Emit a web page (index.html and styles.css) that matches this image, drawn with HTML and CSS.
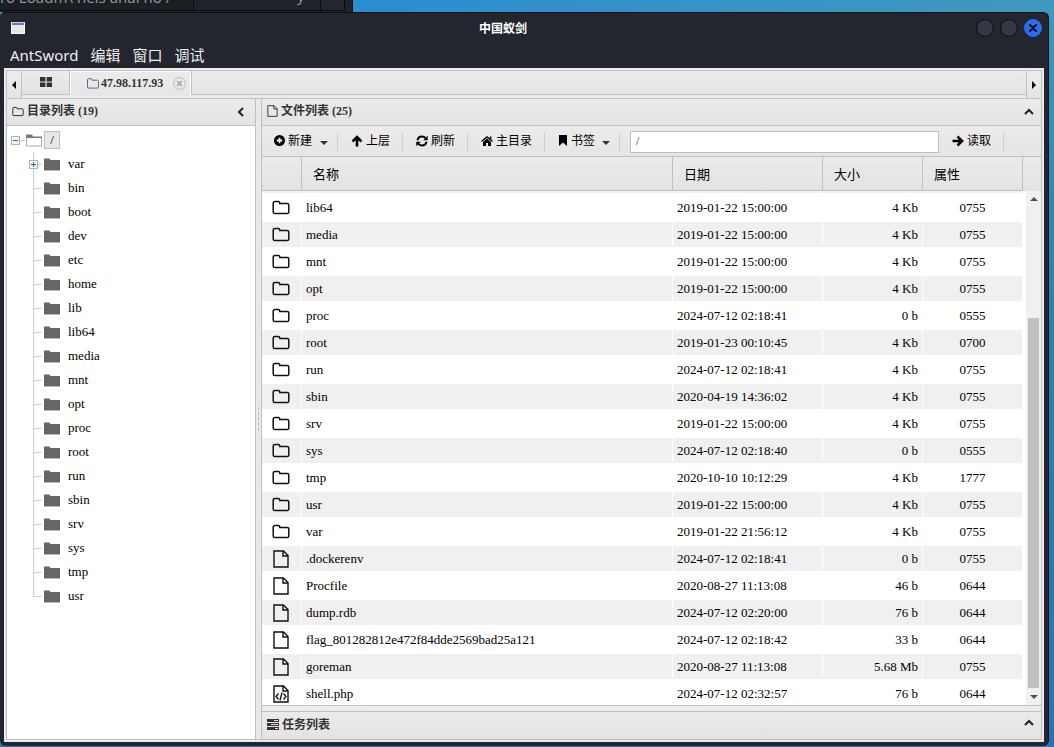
FILE: index.html
```html
<!DOCTYPE html>
<html lang="zh-CN">
<head>
<meta charset="utf-8">
<title>中国蚁剑</title>
<link rel="stylesheet" href="styles.css">
</head>
<body>
<svg class="sprites" aria-hidden="true">
  <symbol id="i-folder-o" viewBox="0 0 18 15"><path d="M1.2 3.2q0-1.8 1.8-1.8h3.3q1.5 0 1.5 2h7.4q1.6 0 1.6 1.6v7q0 1.6-1.6 1.6H3q-1.8 0-1.8-1.6z" fill="none" stroke="currentColor" stroke-width="1.5"/></symbol>
  <symbol id="i-file-o" viewBox="0 0 16 18"><path d="M1 1h9.5L15 5.5V17H1zM10 1v5h5" fill="none" stroke="currentColor" stroke-width="1.4"/></symbol>
  <symbol id="i-code" viewBox="0 0 16 18"><path d="M1 1h9.5L15 5.5V17H1zM10 1v5h5" fill="none" stroke="currentColor" stroke-width="1.4"/><path d="M5.5 8.5L3 11.5l2.500 3M10.500 8.500l2.500 3-2.500 3M9 7.500l-2 8" fill="none" stroke="currentColor" stroke-width="1.300"/></symbol>
  <symbol id="i-folder" viewBox="0 0 16 13"><path d="M0 .5h5.500l1 1.500H16v10.500H0z" fill="#666"/><path d="M0 12.500h16" stroke="#bbb"/></symbol>
  <symbol id="i-folder-open" viewBox="0 0 16 13"><path d="M.5 3.500h15v8.500H.5z" fill="#fff" stroke="#aaa"/><path d="M0 .5h6l1 2h9v1.500H0z" fill="#777"/></symbol>
</svg>
<div class="desktop">
  <div class="terminal" aria-hidden="true">
    <span class="term-tab">ro Loadm\ hels anal no /</span>
    <span class="term-main">y</span>
    <span class="term-box"></span>
  </div>
  <main class="window">
    <header class="titlebar">
      <svg class="app-icon" viewBox="0 0 14 12"><path d="M0 0h14v12H0z" fill="#e6e9e2"/><path d="M0 0h14v3H0z" fill="#5c7fb5"/><path d="M0 0h14v1H0z" fill="#c7d3e4"/><path d="M.5.5v11h13V.5" fill="none" stroke="#fafafa"/></svg>
      <h1>中国蚁剑</h1>
      <div class="controls">
        <button class="ctl" aria-label="最小化"></button>
        <button class="ctl" aria-label="最大化"></button>
        <button class="ctl close" aria-label="关闭"><svg viewBox="0 0 8 8"><path d="M1 1l6 6M7 1L1 7" stroke="#0b1020" stroke-width="2.200" stroke-linecap="round"/></svg></button>
      </div>
    </header>
    <nav class="menu">
      <button>AntSword</button><button>编辑</button><button>窗口</button><button>调试</button>
    </nav>
    <div class="client">
      <div class="frame">
        <div class="tabbar">
          <button class="scroll-btn left" aria-label="向左"><svg viewBox="0 0 4 8"><path d="M4 0v8L0 4z"/></svg></button>
          <button class="tab home" aria-label="主页"><svg viewBox="0 0 12 10"><path d="M0 0h5.400v4.400H0zM6.600 0H12v4.400H6.600zM0 5.600h5.400V10H0zM6.600 5.600H12V10H6.600z"/></svg></button>
          <div class="tab active"><svg class="tab-folder" viewBox="0 0 12 11"><path d="M.5 2q0-1.300 1.200-1.300H4q1 0 1 1.500h5.300q1.200 0 1.200 1.200v5.500q0 1.200-1.200 1.200H1.700Q.5 10.100.5 9z" fill="none" stroke="#4d6d96"/></svg><span>47.98.117.93</span>
            <button class="tab-close" aria-label="关闭标签"><svg viewBox="0 0 13 13"><circle cx="6.500" cy="6.500" r="5.900" fill="none" stroke="#bbb" stroke-width="1"/><path d="M4.200 4.200l4.600 4.600M8.800 4.200L4.200 8.800" stroke="#aaa" stroke-width="1.800"/></svg></button>
          </div>
          <div class="tab-fill"></div>
          <button class="scroll-btn right" aria-label="向右"><svg viewBox="0 0 4 8"><path d="M0 0v8l4-4z"/></svg></button>
        </div>
        <div class="panes">
          <section class="side">
            <div class="pane-title"><svg class="t-folder"><use href="#i-folder-o"/></svg><h2>目录列表 (19)</h2><button class="fold" aria-label="折叠"><svg viewBox="0 0 10 10"><path d="M7 1L3 5l4 4" /></svg></button></div>
            <ul class="tree">
              <li><div class="node"><span class="branch root"><i class="toggle"></i></span><svg class="dir"><use href="#i-folder-open"/></svg><span class="label selected">/</span></div>
                <ul id="tree"></ul>
              </li>
            </ul>
          </section>
          <div class="splitter"><i></i></div>
          <section class="main">
            <div class="pane-title"><svg class="t-file"><use href="#i-file-o"/></svg><h2>文件列表 (25)</h2><button class="fold" aria-label="折叠"><svg viewBox="0 0 10 10"><path d="M1 7l4-4 4 4"/></svg></button></div>
            <div class="toolbar">
              <button class="tool drop"><svg class="narrow" viewBox="0 0 12 12"><circle cx="6" cy="6" r="6"/><path d="M6 3v6M3 6h6" stroke="#eee" stroke-width="2"/></svg>新建<b class="caret"></b></button>
              <button class="tool"><svg viewBox="0 0 12 12"><path d="M6 11.500V2.500M1.500 6.500L6 2l4.500 4.500" fill="none" stroke="#000" stroke-width="2.600"/></svg>上层</button>
              <button class="tool"><svg viewBox="0 0 12 12"><path d="M1.500 5.200C2 2.800 4 1.500 6 1.500q2 0 3.500 1.500M10.500 6.800C10 9.200 8 10.500 6 10.500q-2 0-3.500-1.500" fill="none" stroke="#000" stroke-width="2"/><path d="M11.700.8v4.400H7.300zM.3 11.200V6.800h4.400z"/></svg>刷新</button>
              <button class="tool"><svg viewBox="0 0 12 12"><path d="M6 1l6 5-.8.900L6 2.700.8 6.900 0 6zM6 3.600l4 3.300V11H7V8H5v3H2V6.900zM8.800 1.500h1.600v3L8.800 3z"/></svg>主目录</button>
              <button class="tool drop"><svg class="narrow" viewBox="0 0 9 11"><path d="M.5 0h8v11L4.500 7.500.5 11z"/></svg>书签<b class="caret"></b></button>
              <input class="path" type="text" value="/" aria-label="路径">
              <button class="tool"><svg viewBox="0 0 12 12"><path d="M.5 6h9M5.500 1.500L10 6l-4.500 4.500" fill="none" stroke="#000" stroke-width="2.600"/></svg>读取</button>
            </div>
            <div class="grid">
              <div class="table-wrap">
                <table>
                  <thead><tr><th class="c-icon"></th><th>名称</th><th class="c-date">日期</th><th class="c-size">大小</th><th class="c-perm">属性</th></tr></thead>
                  <tbody id="files"><tr class="peek"><td></td><td></td><td></td><td></td><td></td></tr></tbody>
                </table>
              </div>
              <div class="gutter">
                <div class="gutter-head"></div>
                <div class="scrollbar"><svg viewBox="0 0 8 4"><path d="M0 4h8L4 0z"/></svg><div class="track"><div class="thumb"></div></div><svg viewBox="0 0 8 4"><path d="M0 0h8L4 4z"/></svg></div>
              </div>
            </div>
            <div class="h-gap"></div>
            <div class="pane-title tasks"><svg class="t-tasks" viewBox="0 0 12 11"><path d="M0 0h12v3H0zM0 4h12v3H0zM0 8h12v3H0z" fill="#333"/><path d="M7 1.500h4M4 5.500h7M8 9.500h3" stroke="#ddd"/></svg><h2>任务列表</h2><button class="fold" aria-label="展开"><svg viewBox="0 0 10 10"><path d="M1 7l4-4 4 4"/></svg></button></div>
          </section>
        </div>
      </div>
    </div>
  </main>
</div>
<script src="app.js"></script>
</body>
</html>
```
FILE: styles.css
```css
* { box-sizing: border-box; }
body { margin: 0; font: 13px/16px "Liberation Serif", "Noto Sans CJK SC", serif; color: #000; }
h1, h2, ul { margin: 0; padding: 0; }
ul { list-style: none; }
svg { display: block; flex: none; }
button { border: 0; padding: 0; background: none; font: inherit; color: inherit; }
.sprites { display: none; }

.desktop {
  height: 100vh; display: flex; flex-direction: column; padding: 0 5px 1px 0; overflow: hidden;
  background: linear-gradient(90deg, #2b8ccf 353px, #3f99bf 100%) top / 100% 12px no-repeat,
    linear-gradient(#3e99bd, #2e80ad 40%, #2a72b8) #2a72b8;
}
.terminal { height: 12px; width: 353px; flex: none; display: flex; background: #1f222a; border-right: 1px solid #0b0c10; overflow: hidden; font: bold 15px/18px "Noto Sans", sans-serif; color: #8f9296; }
.terminal span { height: 11px; display: flex; align-items: flex-end; border-bottom: 1px solid #0d0e12; }
.term-tab { width: 194px; background: #1b1e23; border-right: 1px solid #0b0c10; padding-bottom: 4px; white-space: pre; font-weight: normal; }
.term-main { width: 127px; padding-left: 103px; padding-bottom: 6px; border-right: 1px solid #0b0c10; font-weight: normal; }
.term-box { width: 24px; border-right: 1px solid #0b0c10; background: #23262f; }

.window { flex: 1; min-height: 0; display: flex; flex-direction: column; background: #23262e; border-top: 1px solid #0d0f14; border-right: 1px solid #0d0f14; border-radius: 5px 6px 6px 6px; }
.titlebar { height: 30px; flex: none; display: flex; align-items: center; padding: 0 6px 0 11px; }
.app-icon { width: 14px; height: 12px; }
.titlebar h1 { flex: 1; padding-left: 5px; text-align: center; font: bold 12px/16px "Noto Sans CJK SC", sans-serif; color: #fff; }
.controls { display: flex; gap: 6px; }
.ctl { width: 18px; height: 18px; border-radius: 50%; border: 1px solid #0a0b0f; background: #343844; display: grid; place-items: center; }
.ctl.close { background: #2a6cf0; border-color: #2a6cf0; }
.ctl svg { width: 8px; height: 8px; }
.menu { height: 25px; flex: none; display: flex; align-items: center; gap: 12px; padding: 0 0 1px 10px; font: 15px/20px "Noto Sans", "Noto Sans CJK SC", sans-serif; color: #eee; }

.client { flex: 1; min-height: 0; margin: 0 4px 4px; background: #ebebeb; padding: 2px; display: flex; }
.frame { flex: 1; min-width: 0; display: flex; flex-direction: column; border: 1px solid #c0c0c0; }

.tabbar { height: 28px; flex: none; display: flex; align-items: flex-start; border-bottom: 1px solid #c0c0c0; background: #ebebeb; font-size: 12px; font-weight: bold; color: #333; }
.scroll-btn { width: 15px; height: 27px; display: grid; place-items: center; padding-top: 1px; background: linear-gradient(#ededed, #e4e4e4); }
.scroll-btn svg { width: 4px; height: 8px; }
.scroll-btn.left { border-right: 1px solid #c0c0c0; }
.scroll-btn.right { border-left: 1px solid #c0c0c0; }
.tab { height: 24px; display: flex; align-items: center; background: linear-gradient(#ebebeb, #e3e3e3); }
.tab.home { width: 48px; justify-content: center; padding-bottom: 1px; border: solid #c0c0c0; border-width: 0 1px 1px 0; }
.home svg { width: 12px; height: 10px; fill: #333; }
.tab.active { height: 25px; border: solid #fff; border-width: 1px 1px 0; padding: 0 4px 2px 16px; background: linear-gradient(#ebebeb, #e6e6e6); }
.tab-folder { width: 12px; height: 11px; margin-right: 2px; }
.tab-close { margin-left: 10px; }
.tab-close svg { width: 13px; height: 13px; }
.tab-fill { flex: 1; height: 24px; border: solid #c0c0c0; border-width: 0 0 1px 1px; background: linear-gradient(#ebebeb, #e4e4e4); }

.panes { flex: 1; min-height: 0; display: flex; }
.side { width: 249px; flex: none; border-right: 1px solid #c0c0c0; background: #fff; }
.splitter { width: 5px; flex: none; background: #e9e9e9; display: grid; place-items: center; }
.splitter i { height: 24px; border-left: 1px dashed #bbb; }
.main { flex: 1; min-width: 0; display: flex; flex-direction: column; border-left: 1px solid #c0c0c0; }
.pane-title { height: 27px; flex: none; display: flex; align-items: center; padding: 0 7px 2px 5px; border-bottom: 1px solid #c0c0c0; background: linear-gradient(#ebebeb, #e3e3e3); color: #333; }
.pane-title h2 { flex: 1; font-size: 12px; line-height: 16px; }
.pane-title svg { margin-right: 3px; }
.t-folder { width: 12px; height: 11px; }
.t-file { width: 11px; height: 12px; }
.pane-title .t-tasks { width: 12px; height: 11px; }
.fold svg { width: 10px; height: 10px; margin: 2px 0 0; fill: none; stroke: #222; stroke-width: 2; }
.pane-title .fold svg { margin-right: 0; }
.side .fold { margin-right: 2px; }
.pane-title.tasks { height: 28px; border-width: 1px 0 0; border-top: 1px solid #c0c0c0; }
.tasks .fold { padding-bottom: 6px; }
.h-gap { height: 5px; flex: none; background: #ebebeb; }

.tree { padding-top: 2px; }
.node { height: 24px; display: flex; align-items: center; }
.branch { width: 18px; height: 24px; flex: none; display: flex; align-items: center; padding-left: 3px;
  background: linear-gradient(#d0d0d0, #d0d0d0) 7px 0 / 1px 100% no-repeat, linear-gradient(#d0d0d0, #d0d0d0) 7px 12px / 9px 1px no-repeat; }
.branch.root { width: 19px; padding-left: 4px; background: linear-gradient(#d0d0d0, #d0d0d0) 10px 12px / 8px 1px no-repeat; }
.tree ul { padding-left: 19px; }
li:last-child > .node > .branch:not(.root) { background-size: 1px 13px, 9px 1px; }
.toggle { width: 9px; height: 9px; border: 1px solid #a5b6c0; background: linear-gradient(#40697e, #40697e) center / 5px 1px no-repeat #eef5f8; }
.toggle.plus { background: linear-gradient(#40697e, #40697e) center / 5px 1px no-repeat, linear-gradient(#40697e, #40697e) center / 1px 5px no-repeat #eef5f8; }
.dir { width: 16px; height: 13px; }
.label { margin-left: 8px; }
.label.selected { margin-left: 2px; width: 16px; height: 18px; line-height: 16px; text-align: center; border: 1px solid #c0c0c0; background: #e8e8e8; }

.toolbar { height: 31px; flex: none; display: flex; align-items: center; padding: 1px 37px 0 0; border-bottom: 1px solid #c0c0c0; background: linear-gradient(#ebebeb, #e5e5e5); font-size: 12px; }
.tool { height: 20px; display: flex; align-items: center; gap: 3px; padding: 0 12px 2px 13px; border-right: 1px solid #c3d3dc; white-space: nowrap; }
.tool.drop { padding-right: 9px; }
.tool:first-child { padding-left: 12px; }
.tool svg { width: 12px; height: 12px; }
.tool svg.narrow { width: 11px; height: 11px; }
.tool:not(:first-child) svg.narrow { width: 10px; }
.tool:first-child .caret { margin-left: 5px; }
.caret { border: solid transparent; border-width: 4px 4px 0; border-top-color: #333; margin: 4px 0 0 4px; }
.path { flex: 1; min-width: 0; height: 22px; margin-left: 10px; padding: 0 5px; border: 1px solid #c0c0c0; background: #fff; font: inherit; color: #333; }

.grid { flex: 1; min-height: 0; display: flex; overflow: hidden; background: #fff; border-bottom: 1px solid #c0c0c0; }
.table-wrap { flex: 1; min-width: 0; }
table { width: 100%; table-layout: fixed; border-collapse: separate; border-spacing: 0; }
th { height: 34px; padding: 2px 0 0 11px; text-align: left; font-weight: normal; border: solid #c0c0c0; border-width: 0 1px 1px 0; background: linear-gradient(#ebebeb, #e3e3e3); }
.c-icon { width: 40px; }
.c-date { width: 150px; }
.c-size, .c-perm { width: 100px; }
td { height: 27px; padding: 0 4px; border: solid #fff; border-width: 1px 1px 1px 0; line-height: 16px; white-space: nowrap; overflow: hidden; }
td:first-child { padding-right: 5px; }
td:nth-child(4) { text-align: right; }
td:nth-child(5) { text-align: center; }
td svg { margin: 0 auto; color: #111; }
.r-folder { width: 18px; height: 15px; }
.r-file { width: 16px; height: 18px; }
tr:nth-child(odd) td { background: #f0f0f0; }
.peek td { height: 3px; padding: 0; border-top: 0; }
.gutter { width: 18px; flex: none; display: flex; flex-direction: column; }
.gutter-head { height: 34px; flex: none; background: linear-gradient(#ebebeb, #e3e3e3); }
.scrollbar { flex: 1; margin-left: 3px; background: #f0f0f0; display: flex; flex-direction: column; align-items: center; padding: 6px 0; fill: #505050; }
.scrollbar svg { width: 8px; height: 4px; }
.track { flex: 1; width: 11px; margin: 7px 0; display: flex; align-items: flex-end; }
.thumb { width: 100%; height: 77%; background: #c1c1c1; }
```
FILE: app.js
```js
const folders = ["var","bin","boot","dev","etc","home","lib","lib64","media","mnt","opt","proc","root","run","sbin","srv","sys","tmp","usr"];
document.getElementById("tree").innerHTML = folders.map((name, i) =>
  `<li><div class="node"><span class="branch">${i ? "" : '<i class="toggle plus"></i>'}</span><svg class="dir"><use href="#i-folder"/></svg><span class="label">${name}</span></div></li>`).join("");

const files = [
  ["folder-o","lib64","2019-01-22 15:00:00","4 Kb","0755"],
  ["folder-o","media","2019-01-22 15:00:00","4 Kb","0755"],
  ["folder-o","mnt","2019-01-22 15:00:00","4 Kb","0755"],
  ["folder-o","opt","2019-01-22 15:00:00","4 Kb","0755"],
  ["folder-o","proc","2024-07-12 02:18:41","0 b","0555"],
  ["folder-o","root","2019-01-23 00:10:45","4 Kb","0700"],
  ["folder-o","run","2024-07-12 02:18:41","4 Kb","0755"],
  ["folder-o","sbin","2020-04-19 14:36:02","4 Kb","0755"],
  ["folder-o","srv","2019-01-22 15:00:00","4 Kb","0755"],
  ["folder-o","sys","2024-07-12 02:18:40","0 b","0555"],
  ["folder-o","tmp","2020-10-10 10:12:29","4 Kb","1777"],
  ["folder-o","usr","2019-01-22 15:00:00","4 Kb","0755"],
  ["folder-o","var","2019-01-22 21:56:12","4 Kb","0755"],
  ["file-o",".dockerenv","2024-07-12 02:18:41","0 b","0755"],
  ["file-o","Procfile","2020-08-27 11:13:08","46 b","0644"],
  ["file-o","dump.rdb","2024-07-12 02:20:00","76 b","0644"],
  ["file-o","flag_801282812e472f84dde2569bad25a121","2024-07-12 02:18:42","33 b","0644"],
  ["file-o","goreman","2020-08-27 11:13:08","5.68 Mb","0755"],
  ["code","shell.php","2024-07-12 02:32:57","76 b","0644"]
];
document.getElementById("files").insertAdjacentHTML("beforeend", files.map(([icon, ...cells]) =>
  `<tr><td><svg class="${icon === "folder-o" ? "r-folder" : "r-file"}"><use href="#i-${icon}"/></svg></td>${cells.map(c => `<td>${c}</td>`).join("")}</tr>`).join(""));
```
